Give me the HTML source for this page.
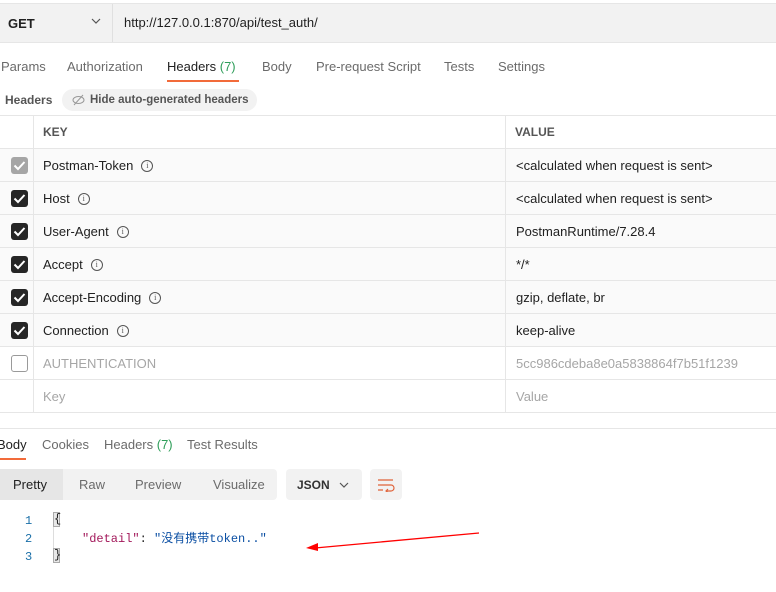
<!DOCTYPE html>
<html><head><meta charset="utf-8"><style>
*{margin:0;padding:0;box-sizing:border-box}
body{width:776px;height:592px;background:#fff;font-family:"Liberation Sans","Noto Sans CJK SC",sans-serif;font-size:13px;color:#212121;position:relative;overflow:hidden}
.a{position:absolute}
.tab{position:absolute;top:59px;color:#6b6b6b;font-size:13px}
.row{position:absolute;left:0;width:776px;height:33px;border-bottom:1px solid #e6e6e6}
.row .k{position:absolute;left:43px;top:9px}
.row .v{position:absolute;left:516px;top:9px}
.row .c{position:absolute;left:11px;top:8px;width:17px;height:17px;border-radius:3px;background:#262626}
.row .c svg{position:absolute;left:2px;top:3px}
.info{display:inline-block;width:12px;height:12px;border:1.2px solid #555;border-radius:50%;font-size:8px;text-align:center;line-height:10px;margin-left:8px;vertical-align:top;margin-top:2px;color:#555;font-family:"Liberation Serif",serif}
.vl{position:absolute;top:115px;width:1px;height:297px;background:#e6e6e6}
</style></head><body>
<div class="a" style="left:0;top:3px;width:776px;height:40px;background:#f2f2f2;border-top:1px solid #e6e6e6;border-bottom:1px solid #e6e6e6"></div>
<div class="a" style="left:112px;top:4px;width:1px;height:38px;background:#e0e0e0"></div>
<div class="a" style="left:8px;top:16px;font-weight:bold;font-size:13px">GET</div>
<svg class="a" style="left:91px;top:18px" width="10" height="7"><path d="M1 1l4 4 4-4" stroke="#555" fill="none" stroke-width="1.2"/></svg>
<div class="a" style="left:124px;top:15px;font-size:13px">http://127.0.0.1:870/api/test_auth/</div>
<div class="tab" style="left:1px">Params</div>
<div class="tab" style="left:67px">Authorization</div>
<div class="tab" style="left:167px;color:#212121">Headers <span style="color:#2f9e5a">(7)</span></div>
<div class="a" style="left:167px;top:80px;width:72px;height:2px;background:#f26b3a"></div>
<div class="tab" style="left:262px">Body</div>
<div class="tab" style="left:316px">Pre-request Script</div>
<div class="tab" style="left:444px">Tests</div>
<div class="tab" style="left:498px">Settings</div>
<div class="a" style="left:5px;top:93px;color:#555;font-weight:bold;font-size:12px">Headers</div>
<div class="a" style="left:62px;top:89px;width:195px;height:22px;border-radius:11px;background:#f2f2f2"></div>
<svg class="a" style="left:72px;top:94px" width="13" height="12"><ellipse cx="6.5" cy="6" rx="5.5" ry="3.5" stroke="#999" fill="none"/><path d="M2 11L11 1" stroke="#999"/></svg>
<div class="a" style="left:90px;top:94px;color:#555;font-weight:bold;font-size:11.5px">Hide auto-generated headers</div>
<div class="a" style="left:0;top:115px;width:776px;height:1px;background:#e6e6e6"></div>
<div class="row" style="top:115px;height:34px"><div class="a" style="left:43px;top:10px;color:#555;font-weight:bold;font-size:12px">KEY</div><div class="a" style="left:515px;top:10px;color:#555;font-weight:bold;font-size:12px">VALUE</div></div>
<div class="row" style="top:149px;background:#fafafa"><div class="c" style="background:#a6a6a6"><svg width="13" height="11"><path d="M1.5 5.5l3.5 3.5 6.5-7" stroke="#fff" stroke-width="2" fill="none"/></svg></div><div class="k">Postman-Token<span class="info">i</span></div><div class="v">&lt;calculated when request is sent&gt;</div></div>
<div class="row" style="top:182px;background:#fafafa"><div class="c"><svg width="13" height="11"><path d="M1.5 5.5l3.5 3.5 6.5-7" stroke="#fff" stroke-width="2" fill="none"/></svg></div><div class="k">Host<span class="info">i</span></div><div class="v">&lt;calculated when request is sent&gt;</div></div>
<div class="row" style="top:215px;background:#fafafa"><div class="c"><svg width="13" height="11"><path d="M1.5 5.5l3.5 3.5 6.5-7" stroke="#fff" stroke-width="2" fill="none"/></svg></div><div class="k">User-Agent<span class="info">i</span></div><div class="v">PostmanRuntime/7.28.4</div></div>
<div class="row" style="top:248px;background:#fafafa"><div class="c"><svg width="13" height="11"><path d="M1.5 5.5l3.5 3.5 6.5-7" stroke="#fff" stroke-width="2" fill="none"/></svg></div><div class="k">Accept<span class="info">i</span></div><div class="v">*/*</div></div>
<div class="row" style="top:281px;background:#fafafa"><div class="c"><svg width="13" height="11"><path d="M1.5 5.5l3.5 3.5 6.5-7" stroke="#fff" stroke-width="2" fill="none"/></svg></div><div class="k">Accept-Encoding<span class="info">i</span></div><div class="v">gzip, deflate, br</div></div>
<div class="row" style="top:314px;background:#fafafa"><div class="c"><svg width="13" height="11"><path d="M1.5 5.5l3.5 3.5 6.5-7" stroke="#fff" stroke-width="2" fill="none"/></svg></div><div class="k">Connection<span class="info">i</span></div><div class="v">keep-alive</div></div>
<div class="row" style="top:347px"><div class="c" style="background:#fff;border:1px solid #9a9a9a"></div><div class="k" style="color:#a6a6a6">AUTHENTICATION</div><div class="v" style="color:#a6a6a6">5cc986cdeba8e0a5838864f7b51f1239</div></div>
<div class="row" style="top:380px"><div class="k" style="color:#a6a6a6">Key</div><div class="v" style="color:#a6a6a6">Value</div></div>
<div class="vl" style="left:33px"></div>
<div class="vl" style="left:505px"></div>
<div class="a" style="left:0;top:428px;width:776px;height:1px;background:#e6e6e6"></div>
<div class="a" style="left:-3px;top:437px;color:#212121">Body</div>
<div class="a" style="left:0;top:458px;width:26px;height:2px;background:#f26b3a"></div>
<div class="a" style="left:42px;top:437px;color:#6b6b6b">Cookies</div>
<div class="a" style="left:104px;top:437px;color:#6b6b6b">Headers <span style="color:#2f9e5a">(7)</span></div>
<div class="a" style="left:187px;top:437px;color:#6b6b6b">Test Results</div>
<div class="a" style="left:0;top:469px;width:277px;height:31px;background:#f2f2f2;border-radius:0 4px 4px 0"></div>
<div class="a" style="left:0;top:469px;width:63px;height:31px;background:#e6e6e6"></div>
<div class="a" style="left:13px;top:477px">Pretty</div>
<div class="a" style="left:79px;top:477px;color:#6b6b6b">Raw</div>
<div class="a" style="left:135px;top:477px;color:#6b6b6b">Preview</div>
<div class="a" style="left:213px;top:477px;color:#6b6b6b">Visualize</div>
<div class="a" style="left:286px;top:469px;width:76px;height:31px;background:#f2f2f2;border-radius:4px"></div>
<div class="a" style="left:297px;top:478px;font-weight:bold;font-size:12px;color:#333">JSON</div>
<svg class="a" style="left:339px;top:482px" width="10" height="7"><path d="M1 1l4 4 4-4" stroke="#555" fill="none" stroke-width="1.2"/></svg>
<div class="a" style="left:370px;top:469px;width:32px;height:31px;background:#f2f2f2;border-radius:4px"></div>
<svg class="a" style="left:377px;top:478px" width="18" height="14"><path d="M1 2h15M1 7h13a3 3 0 0 1 0 6h-4M1 12h5M11 11l-2 2 2 2" stroke="#e0633a" fill="none" stroke-width="1.2"/></svg>
<div class="a" style="left:53px;top:512px;width:1px;height:50px;background:#ddd"></div>
<div class="a" style="font-family:'Liberation Mono','Noto Sans CJK SC',monospace;font-size:12px;left:25px;top:512px;color:#1a6fa8;line-height:18px">1<br>2<br>3</div>
<div class="a" style="left:53px;top:512px;width:7px;height:15px;border:1px solid #aaa;background:#e8e8e8;font:12px 'Liberation Mono';line-height:13px">{</div>
<div class="a" style="left:53px;top:548px;width:7px;height:15px;border:1px solid #aaa;background:#e8e8e8;font:12px 'Liberation Mono';line-height:13px">}</div>
<div class="a" style="font-family:'Liberation Mono','Noto Sans CJK SC',monospace;font-size:12px;left:82px;top:529px"><span style="color:#a3195b">"detail"</span>: <span style="color:#0b4fa3">"没有携带token.."</span></div>
<svg class="a" style="left:300px;top:528px" width="185" height="26"><path d="M179 5L15 20" stroke="#f00" stroke-width="1.3"/><path d="M6 20l12-5 0 8z" fill="#f00"/></svg>
</body></html>
